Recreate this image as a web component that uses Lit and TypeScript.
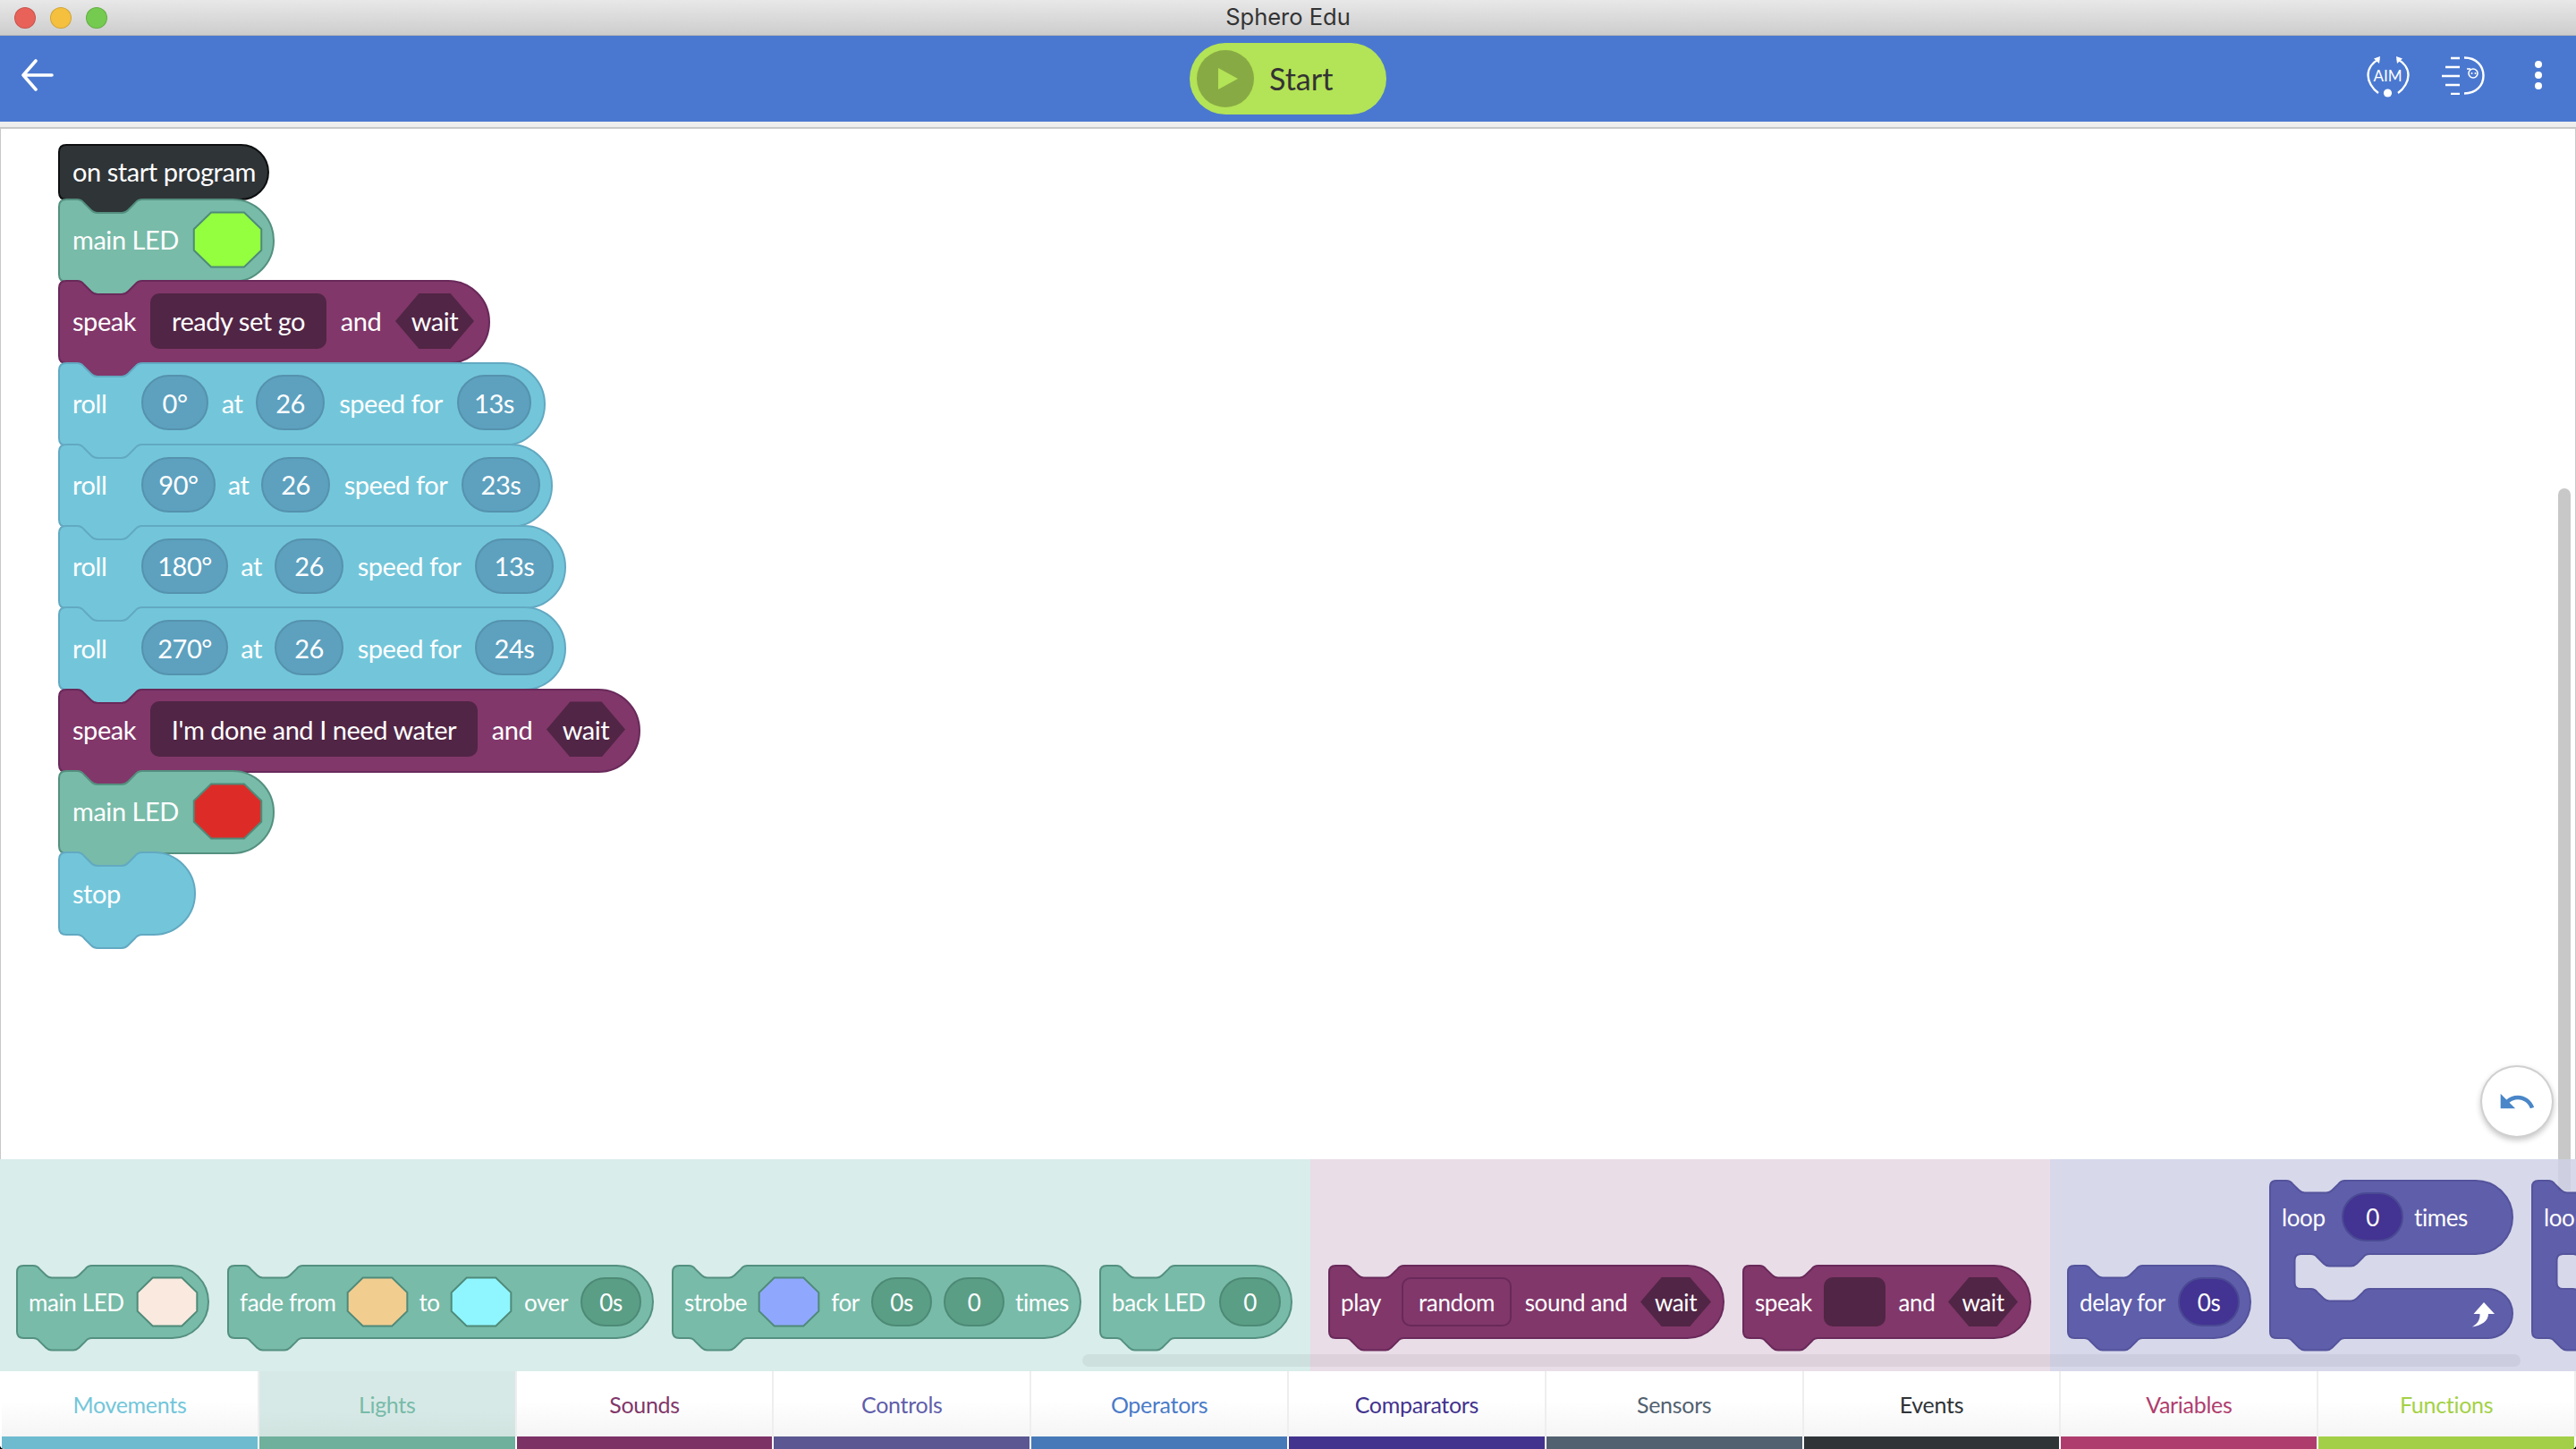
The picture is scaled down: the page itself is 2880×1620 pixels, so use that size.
import { LitElement, html, css, svg } from "lit";
import { customElement } from "lit/decorators.js";

type Piece =
  | { k: "txt"; v: string; w?: number; left?: boolean }
  | { k: "oct"; c: string; w: number }
  | { k: "pill"; v: string; w: number }
  | { k: "box"; v: string; w: number; outline?: boolean }
  | { k: "hex"; v: string; w: number };

interface Block {
  w: number;
  tone: string;
  hat?: boolean;
  pieces: Piece[];
}

const TONES: Record<string, { fill: string; stroke: string }> = {
  dark: { fill: "#2f3437", stroke: "#0d0f10" },
  teal: { fill: "#78bba9", stroke: "#54907f" },
  purple: { fill: "#81376a", stroke: "#69295a" },
  blue: { fill: "#73c6da", stroke: "#62a9c2" },
  violet: { fill: "#5f5eaa", stroke: "#54539c" },
};

function shapePath(w: number, h: number, s: number, hat = false): string {
  const c = 8 * s;
  const R = h / 2;
  const d = 15 * s;
  const p = (n: number) => (n * s).toFixed(1);
  const top = hat
    ? `M0,${c} Q0,0 ${c},0 L${w - R},0`
    : `M0,${c} Q0,0 ${c},0 L${p(20)},0 Q${p(25)},0 ${p(28)},${p(4)} L${p(36)},${p(12)} Q${p(39)},${p(15)} ${p(43)},${p(15)} L${p(70)},${p(15)} Q${p(74)},${p(15)} ${p(77)},${p(12)} L${p(85)},${p(4)} Q${p(88)},0 ${p(93)},0 L${w - R},0`;
  const right = `A${R},${R} 0 0 1 ${w - R},${h}`;
  const tab = `L${p(93)},${h} Q${p(88)},${h} ${p(85)},${h + 4 * s} L${p(77)},${h + 12 * s} Q${p(74)},${h + d} ${p(70)},${h + d} L${p(43)},${h + d} Q${p(39)},${h + d} ${p(36)},${h + 12 * s} L${p(28)},${h + 4 * s} Q${p(25)},${h} ${p(20)},${h} L${c},${h} Q0,${h} 0,${h - c} Z`;
  return `${top} ${right} ${tab}`;
}

function loopPath(w: number): string {
  const s = 0.9;
  const armH = 82;
  const slotB = 121;
  const h = 176;
  const i = 27.5;
  const c = 7;
  const R1 = armH / 2;
  const R2 = (h - slotB) / 2;
  const p = (n: number) => (n * s).toFixed(1);
  const q = (n: number) => (i + n * s).toFixed(1);
  const d = 13.5;
  return [
    `M0,${c} Q0,0 ${c},0 L${p(20)},0 Q${p(25)},0 ${p(28)},${p(4)} L${p(36)},${p(12)} Q${p(39)},${p(15)} ${p(43)},${p(15)} L${p(70)},${p(15)} Q${p(74)},${p(15)} ${p(77)},${p(12)} L${p(85)},${p(4)} Q${p(88)},0 ${p(93)},0 L${w - R1},0`,
    `A${R1},${R1} 0 0 1 ${w - R1},${armH}`,
    `L${q(93)},${armH} Q${q(88)},${armH} ${q(85)},${armH + 3.6} L${q(77)},${armH + 10.8} Q${q(74)},${armH + d} ${q(70)},${armH + d} L${q(43)},${armH + d} Q${q(39)},${armH + d} ${q(36)},${armH + 10.8} L${q(28)},${armH + 3.6} Q${q(25)},${armH} ${q(20)},${armH} L${i + c},${armH} Q${i},${armH} ${i},${armH + c}`,
    `L${i},${slotB - c} Q${i},${slotB} ${i + c},${slotB} L${q(20)},${slotB} Q${q(25)},${slotB} ${q(28)},${slotB + 3.6} L${q(36)},${slotB + 10.8} Q${q(39)},${slotB + d} ${q(43)},${slotB + d} L${q(70)},${slotB + d} Q${q(74)},${slotB + d} ${q(77)},${slotB + 10.8} L${q(85)},${slotB + 3.6} Q${q(88)},${slotB} ${q(93)},${slotB} L${w - R2},${slotB}`,
    `A${R2},${R2} 0 0 1 ${w - R2},${h}`,
    `L${p(93)},${h} Q${p(88)},${h} ${p(85)},${h + 3.6} L${p(77)},${h + 10.8} Q${p(74)},${h + d} ${p(70)},${h + d} L${p(43)},${h + d} Q${p(39)},${h + d} ${p(36)},${h + 10.8} L${p(28)},${h + 3.6} Q${p(25)},${h} ${p(20)},${h} L${c},${h} Q0,${h} 0,${h - c} Z`,
  ].join(" ");
}

const roll = (a: string, aw: number, g1: number, g2: number, t: string, tw: number, w: number): Block => ({
  w,
  tone: "blue",
  pieces: [
    { k: "txt", v: "roll", w: 93, left: true },
    { k: "pill", v: a, w: aw },
    { k: "txt", v: "at", w: g1 },
    { k: "pill", v: "26", w: 77 },
    { k: "txt", v: "speed for", w: g2 },
    { k: "pill", v: t, w: tw },
  ],
});

const STACK: Block[] = [
  { w: 236, tone: "dark", hat: true, pieces: [{ k: "txt", v: "on start program", left: true }] },
  {
    w: 242,
    tone: "teal",
    pieces: [
      { k: "txt", v: "main LED", w: 151, left: true },
      { k: "oct", c: "#93ff3f", w: 77 },
    ],
  },
  {
    w: 483,
    tone: "purple",
    pieces: [
      { k: "txt", v: "speak", w: 103, left: true },
      { k: "box", v: "ready set go", w: 197 },
      { k: "txt", v: "and", w: 77 },
      { k: "hex", v: "wait", w: 88 },
    ],
  },
  roll("0°", 75, 53, 148, "13s", 83, 545),
  roll("90°", 83, 51, 147, "23s", 88, 553),
  roll("180°", 97, 52, 147, "13s", 88, 568),
  roll("270°", 97, 52, 147, "24s", 88, 568),
  {
    w: 651,
    tone: "purple",
    pieces: [
      { k: "txt", v: "speak", w: 103, left: true },
      { k: "box", v: "I'm done and I need water", w: 366 },
      { k: "txt", v: "and", w: 77 },
      { k: "hex", v: "wait", w: 88 },
    ],
  },
  {
    w: 242,
    tone: "teal",
    pieces: [
      { k: "txt", v: "main LED", w: 151, left: true },
      { k: "oct", c: "#dd2c28", w: 77 },
    ],
  },
  { w: 154, tone: "blue", pieces: [{ k: "txt", v: "stop", left: true }] },
];

const LIGHTS: Block[] = [
  {
    w: 216,
    tone: "teal",
    pieces: [
      { k: "txt", v: "main LED", w: 135, left: true },
      { k: "oct", c: "#f9e9df", w: 68 },
    ],
  },
  {
    w: 477,
    tone: "teal",
    pieces: [
      { k: "txt", v: "fade from", w: 134, left: true },
      { k: "oct", c: "#f2cd90", w: 68 },
      { k: "txt", v: "to", w: 48 },
      { k: "oct", c: "#8ff6ff", w: 68 },
      { k: "txt", v: "over", w: 77 },
      { k: "pill", v: "0s", w: 68 },
    ],
  },
  {
    w: 458,
    tone: "teal",
    pieces: [
      { k: "txt", v: "strobe", w: 97, left: true },
      { k: "oct", c: "#8fa8fd", w: 68 },
      { k: "txt", v: "for", w: 58 },
      { k: "pill", v: "0s", w: 68 },
      { k: "txt", v: "", w: 13 },
      { k: "pill", v: "0", w: 68 },
      { k: "txt", v: "times", w: 84 },
    ],
  },
  {
    w: 216,
    tone: "teal",
    pieces: [
      { k: "txt", v: "back LED", w: 134, left: true },
      { k: "pill", v: "0", w: 69 },
    ],
  },
];

const SOUNDS: Block[] = [
  {
    w: 443,
    tone: "purple",
    pieces: [
      { k: "txt", v: "play", w: 82, left: true },
      { k: "box", v: "random", w: 123, outline: true },
      { k: "txt", v: "sound and", w: 144 },
      { k: "hex", v: "wait", w: 79 },
    ],
  },
  {
    w: 323,
    tone: "purple",
    pieces: [
      { k: "txt", v: "speak", w: 91, left: true },
      { k: "box", v: "", w: 69 },
      { k: "txt", v: "and", w: 70 },
      { k: "hex", v: "wait", w: 78 },
    ],
  },
];

const DELAY: Block = {
  w: 206,
  tone: "violet",
  pieces: [
    { k: "txt", v: "delay for", w: 124, left: true },
    { k: "pill", v: "0s", w: 69 },
  ],
};

const TABS = [
  { n: "Movements", c: "#73c6da", b: "#6ebbd0" },
  { n: "Lights", c: "#78bba9", b: "#6fb09d", active: true },
  { n: "Sounds", c: "#81376a", b: "#7d3266" },
  { n: "Controls", c: "#5f5eaa", b: "#5a5792" },
  { n: "Operators", c: "#4a7bc8", b: "#4779b8" },
  { n: "Comparators", c: "#42338f", b: "#42338f" },
  { n: "Sensors", c: "#526170", b: "#526170" },
  { n: "Events", c: "#2f3437", b: "#2f3437" },
  { n: "Variables", c: "#b03d6e", b: "#ae3d6e" },
  { n: "Functions", c: "#a4d147", b: "#a2cf47" },
];

@customElement("app-root")
export class AppRoot extends LitElement {
  static styles = css`
    :host {
      display: block;
      width: 2880px;
      height: 1620px;
      font-family: "Lato", "Liberation Sans", sans-serif;
      background: #000;
      overflow: hidden;
    }
    .app {
      width: 100%;
      height: 100%;
      display: flex;
      flex-direction: column;
      background: #fff;
      border-radius: 0 0 5px 5px;
      overflow: hidden;
    }
    .title {
      height: 39px;
      flex: none;
      display: grid;
      grid-template-columns: 1fr auto 1fr;
      align-items: center;
      background: linear-gradient(#e8e8e8, #cdcdcd);
      border-bottom: 1px solid #b4b4b4;
      font-family: "Inter", "Liberation Sans", sans-serif;
      font-size: 25.5px;
      color: #333;
    }
    .title-text { padding-bottom: 2px; }
    .lights {
      display: flex;
      gap: 16px;
      padding-left: 16px;
    }
    .dot {
      width: 24px;
      height: 24px;
      border-radius: 50%;
      border: 1px solid rgba(0, 0, 0, 0.14);
      box-sizing: border-box;
    }
    .d1 { background: #e8625a; }
    .d2 { background: #f4c03e; }
    .d3 { background: #74cb4f; }
    .header {
      height: 96px;
      flex: none;
      background: #4a78d0;
      display: grid;
      grid-template-columns: 1fr auto 1fr;
      align-items: center;
    }
    .back {
      margin: 0 0 8px 23px;
      display: block;
    }
    .start {
      width: 220px;
      height: 80px;
      border-radius: 40px;
      background: #b3e356;
      display: flex;
      align-items: center;
      padding-left: 8px;
      box-sizing: border-box;
      gap: 17px;
      font-size: 34px;
      color: #333;
    }
    .start span { padding-bottom: 2px; }
    .play {
      width: 64px;
      height: 64px;
      display: block;
    }
    .tools {
      display: flex;
      justify-content: flex-end;
      align-items: center;
      margin-bottom: 8px;
      padding-right: 37px;
    }
    .aim { margin: 4px 34px 0 0; display: block; }
    .time { margin-right: 55px; display: block; }
    .strip {
      height: 6px;
      flex: none;
      background: #eeeeee;
    }
    .workspace {
      flex: 1;
      position: relative;
      background: #fff;
      border: 1px solid #c8c8c8;
      border-width: 2px 1px 0 1px;
      box-sizing: border-box;
      padding: 17px 0 0 64px;
      display: flex;
      flex-direction: column;
      align-items: flex-start;
    }
    .block {
      position: relative;
      display: flex;
      align-items: center;
      box-sizing: border-box;
      color: #fff;
      flex: none;
    }
    .block > .shape {
      position: absolute;
      left: 0;
      top: 0;
      overflow: visible;
    }
    .block > * { position: relative; }
    .lg { height: 91.3px; font-size: 29px; letter-spacing: -0.45px; }
    .lg.hat { height: 61px; }
    .sm { height: 83px; font-size: 26px; letter-spacing: -0.4px; }
    .txt {
      flex: none;
      text-align: center;
      white-space: nowrap;
      box-sizing: border-box;
    }
    .lg .txt.left { text-align: left; padding-left: 16px; }
    .sm .txt.left { text-align: left; padding-left: 14px; }
    .field {
      flex: none;
      display: flex;
      align-items: center;
      justify-content: center;
      box-sizing: border-box;
      white-space: nowrap;
    }
    .lg .field { height: 62px; }
    .sm .field { height: 55px; }
    .oct { display: block; width: 100%; height: 100%; overflow: visible; }
    .lg .pill { border-radius: 31px; }
    .sm .pill { border-radius: 27.5px; }
    .pill { border: 2px solid; }
    .box { border-radius: 10px; }
    .hex { clip-path: polygon(30% 0, 70% 0, 100% 50%, 70% 100%, 30% 100%, 0 50%); }
    .tone-blue .pill { background: #5da1bf; border-color: #5592ad; }
    .tone-teal .pill { background: #5a9e86; border-color: #4d8a75; }
    .tone-violet .pill { background: #433392; border-color: #4a4a94; }
    .tone-purple .box, .tone-purple .hex { background: #512545; }
    .tone-purple .box.outline { background: transparent; border: 2px solid #69295a; }

    .thumb {
      position: absolute;
      left: 2859px;
      top: 402px;
      bottom: 0;
      width: 14px;
      background: #c8c8c8;
      border-radius: 7px 7px 0 0;
    }
    .undo {
      position: absolute;
      left: 2772px;
      top: 1047px;
      width: 82px;
      height: 81px;
      border-radius: 50%;
      background: #fff;
      border: 2px solid #d0d0d0;
      box-sizing: border-box;
      box-shadow: 0 3px 6px rgba(0, 0, 0, 0.22);
      display: flex;
      align-items: center;
      justify-content: center;
    }
    .undo svg { display: block; }

    .palette {
      height: 237px;
      flex: none;
      display: flex;
      position: relative;
      overflow: hidden;
    }
    .section {
      flex: none;
      display: flex;
      align-items: flex-end;
      gap: 20px;
      padding-bottom: 36px;
      box-sizing: border-box;
    }
    .s1 { width: 1465px; padding-left: 18px; background: #d9edea; }
    .s2 { width: 827px; padding-left: 20px; background: #e9dde7; }
    .s3 { width: 588px; padding-left: 19px; background: #d7d8ea; }
    .hbar {
      position: absolute;
      left: 1210px;
      width: 1608px;
      top: 218px;
      height: 14px;
      border-radius: 7px;
      background: rgba(0, 0, 0, 0.05);
    }
    .vbar {
      position: absolute;
      left: 2860px;
      top: 0;
      width: 14px;
      height: 35px;
      background: rgba(0, 0, 0, 0.04);
    }
    .loop {
      position: relative;
      flex: none;
      height: 178px;
      color: #fff;
    }
    .loop .shape { position: absolute; left: 0; top: 0; overflow: visible; }
    .loop .block { height: 83px; }
    .arrow { position: absolute; left: 227px; top: 137px; display: block; }

    .tabs {
      height: 87px;
      flex: none;
      display: grid;
      grid-template-columns: repeat(10, 1fr);
      padding-left: 2px;
      background: #fff;
    }
    .tab {
      display: flex;
      flex-direction: column;
    }
    .tab-label {
      flex: 1;
      display: flex;
      align-items: center;
      justify-content: center;
      font-size: 25px;
      letter-spacing: -0.3px;
      background: linear-gradient(#ffffff 45%, #f5f5f5);
      border-right: 2px solid #eeeeee;
    }
    .tab.active .tab-label { background: linear-gradient(#d7e9e6 60%, #d0e3df); }
    .bar {
      height: 14px;
      border-right: 2px solid #fff;
    }
  `;

  private piece(p: Piece) {
    const w = `width:${p.w ?? 0}px`;
    switch (p.k) {
      case "txt":
        return html`<span class="txt ${p.left ? "left" : ""}" style=${p.w ? w : ""}>${p.v}</span>`;
      case "oct":
        return html`<span class="field" style=${w}
          ><svg class="oct" viewBox="0 0 100 100" preserveAspectRatio="none">
            <polygon
              points="26,1 74,1 99,31 99,69 74,99 26,99 1,69 1,31"
              fill=${p.c}
              stroke="#4f8a79"
              stroke-width="2"
              vector-effect="non-scaling-stroke"
            /></svg
        ></span>`;
      case "pill":
        return html`<span class="field pill" style=${w}>${p.v}</span>`;
      case "box":
        return html`<span class="field box ${p.outline ? "outline" : ""}" style=${w}>${p.v}</span>`;
      case "hex":
        return html`<span class="field hex" style=${w}>${p.v}</span>`;
    }
  }

  private block(b: Block, size: "lg" | "sm") {
    const s = size === "lg" ? 1 : 0.9;
    const h = b.hat ? 61 : size === "lg" ? 92 : 81;
    const t = TONES[b.tone];
    return html`<div class="block ${size} tone-${b.tone} ${b.hat ? "hat" : ""}" style="width:${b.w}px">
      <svg class="shape" width=${b.w} height=${h}>
        ${svg`<path transform="translate(1 1)" d=${shapePath(b.w - 2, h, s, b.hat)} fill=${t.fill} stroke=${t.stroke} stroke-width="2" />`}
      </svg>
      ${b.pieces.map((p) => this.piece(p))}
    </div>`;
  }

  private loopBlock(w: number) {
    const t = TONES.violet;
    const row: Piece[] = [
      { k: "txt", v: "loop", w: 81, left: true },
      { k: "pill", v: "0", w: 69 },
      { k: "txt", v: "times", w: 84 },
    ];
    return html`<div class="loop" style="width:${w}px">
      <svg class="shape" width=${w} height="178">
        ${svg`<path transform="translate(1 1)" d=${loopPath(w - 2)} fill=${t.fill} stroke=${t.stroke} stroke-width="2" />`}
      </svg>
      <div class="block sm tone-violet" style="width:${w}px">${row.map((p) => this.piece(p))}</div>
      <svg class="arrow" width="26" height="28" viewBox="0 0 26 28">
        <path d="M13 0 L25 13 L18 13 C18 21 10 26 0 27.5 C6 24 9 19 8.5 13 L1.5 13 Z" fill="#fff" />
      </svg>
    </div>`;
  }

  render() {
    return html`<div class="app">
      <div class="title">
        <div class="lights"><span class="dot d1"></span><span class="dot d2"></span><span class="dot d3"></span></div>
        <div class="title-text">Sphero Edu</div>
        <div></div>
      </div>
      <div class="header">
        <svg class="back" width="38" height="36" viewBox="0 0 38 36" fill="none" stroke="#fff" stroke-width="3.6" stroke-linecap="round" stroke-linejoin="round">
          <path d="M35 18 H3 M17 2 L3 18 L17 34" />
        </svg>
        <div class="start">
          <svg class="play" viewBox="0 0 64 64">
            <circle cx="32" cy="32" r="32" fill="#88aa44" />
            <path d="M24 20 L46 32 L24 44 Z" fill="#b3e356" />
          </svg>
          <span>Start</span>
        </div>
        <div class="tools">
          <svg class="aim" width="48" height="48" viewBox="0 0 48 48" fill="none" stroke="#fff" stroke-width="2.4">
            <path d="M14 4 C6 8 1.5 15 1.5 22 C1.5 29 6 37 13 42" />
            <path d="M34 4 C42 8 46.5 15 46.5 22 C46.5 29 42 37 35 42" />
            <path d="M15 1 L8 3.5 L14 9 Z M33 1 L40 3.5 L34 9 Z" fill="#fff" stroke="none" />
            <circle cx="23.5" cy="42" r="4.6" fill="#fff" stroke="none" />
            <text x="23.5" y="28.7" text-anchor="middle" font-size="17" font-family="Lato, sans-serif" fill="#fff" stroke="none">AIM</text>
          </svg>
          <svg class="time" width="50" height="44" viewBox="0 0 50 44" fill="none" stroke="#fff" stroke-width="2.4">
            <path d="M12 3 H22 M6 13 H22 M2 23 H22 M6 33 H22 M12 43 H22" />
            <path d="M27 2.5 C41 2.5 48.5 12 48.5 22.5 C48.5 33 41 42.5 27 42.5" />
            <circle cx="37" cy="20" r="5" stroke-width="1.6" />
            <path d="M30 15 H34" stroke-width="1.6" />
            <circle cx="35.5" cy="20" r="1" fill="#fff" stroke="none" />
            <circle cx="39.5" cy="20" r="1" fill="#fff" stroke="none" />
          </svg>
          <svg width="10" height="34" viewBox="0 0 10 34" fill="#fff">
            <circle cx="5" cy="5" r="4" /><circle cx="5" cy="17" r="4" /><circle cx="5" cy="29" r="4" />
          </svg>
        </div>
      </div>
      <div class="strip"></div>
      <div class="workspace">
        ${STACK.map((b) => this.block(b, "lg"))}
        <div class="thumb"></div>
        <div class="undo">
          <svg width="44" height="44" viewBox="0 0 24 24">
            <path fill="#4a86c8" d="M12.5 8c-2.65 0-5.05.99-6.9 2.6L2 7v9h9l-3.62-3.62c1.39-1.16 3.16-1.88 5.12-1.88 3.54 0 6.55 2.31 7.6 5.5l2.37-.78C21.08 11.03 17.15 8 12.5 8z" />
          </svg>
        </div>
      </div>
      <div class="palette">
        <div class="section s1">${LIGHTS.map((b) => this.block(b, "sm"))}</div>
        <div class="section s2">${SOUNDS.map((b) => this.block(b, "sm"))}</div>
        <div class="section s3">${this.block(DELAY, "sm")}${this.loopBlock(273)}${this.loopBlock(273)}</div>
        <div class="hbar"></div>
        <div class="vbar"></div>
      </div>
      <div class="tabs">
        ${TABS.map(
          (t) => html`<div class="tab ${t.active ? "active" : ""}">
            <div class="tab-label" style="color:${t.c}">${t.n}</div>
            <div class="bar" style="background:${t.b}"></div>
          </div>`
        )}
      </div>
    </div>`;
  }
}
